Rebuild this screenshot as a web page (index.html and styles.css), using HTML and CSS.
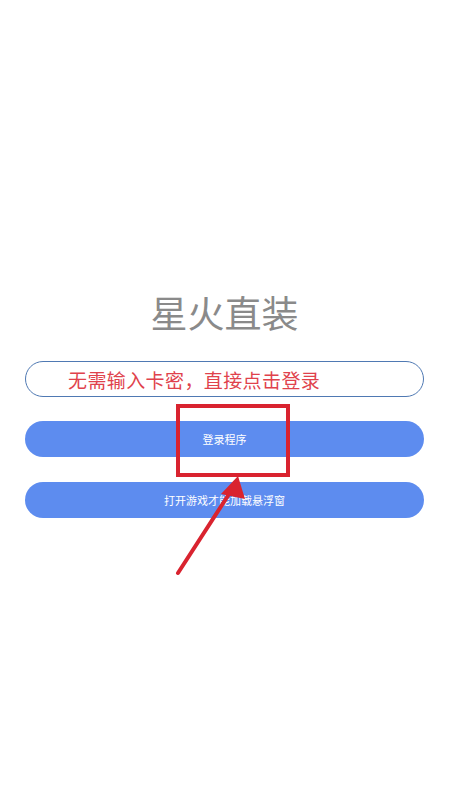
FILE: index.html
```html
<!DOCTYPE html>
<html lang="zh-CN">
<head>
    <meta charset="UTF-8">
    <meta name="viewport" content="width=device-width, initial-scale=1.0">
    <title>星火直装</title>
    <link rel="stylesheet" href="styles.css">
</head>
<body>

    <!-- Login panel -->
    <div class="panel">
        <h1 class="title">星火直装</h1>
        <div class="input">
            <span class="hint">无需输入卡密，直接点击登录</span>
        </div>
        <div class="btn">登录程序</div>
        <div class="btn">打开游戏才能加载悬浮窗</div>
    </div>

    <!-- Annotation overlay -->
    <div class="mark-box"></div>
    <svg class="arrow" width="449" height="800" viewBox="0 0 449 800">
        <line x1="178" y1="573" x2="231" y2="491" stroke="#d9232f" stroke-width="4" stroke-linecap="round"/>
        <polygon points="238,476 221,494 245,499" fill="#d9232f"/>
    </svg>

</body>
</html>
```

FILE: styles.css
```css
body {
    margin: 0;
    padding: 0;
    background-color: #ffffff;
    font-family: "Noto Sans CJK SC", "Noto Sans", sans-serif;
}

.panel {
    display: flex;
    flex-direction: column;
    padding: 287px 25px 0;
}

.title {
    margin: 0;
    text-align: center;
    font-size: 37px;
    font-weight: normal;
    line-height: 50px;
    color: #8a8a8a;
}

.input {
    margin-top: 24px;
    height: 34px;
    border: 1px solid #4f79b3;
    border-radius: 18px;
    display: flex;
    align-items: center;
    padding-left: 42px;
}

.hint {
    font-size: 19px;
    letter-spacing: 0.4px;
    color: #e0424c;
}

.btn {
    height: 36px;
    margin-top: 24px;
    border-radius: 18px;
    background-color: #5d8cef;
    color: white;
    font-size: 11px;
    display: flex;
    align-items: center;
    justify-content: center;
}

.btn + .btn {
    margin-top: 25px;
}

.mark-box {
    position: absolute;
    left: 176px;
    top: 404px;
    width: 106px;
    height: 65px;
    border: 4px solid #d9232f;
}

.arrow {
    position: absolute;
    left: 0;
    top: 0;
}
```
